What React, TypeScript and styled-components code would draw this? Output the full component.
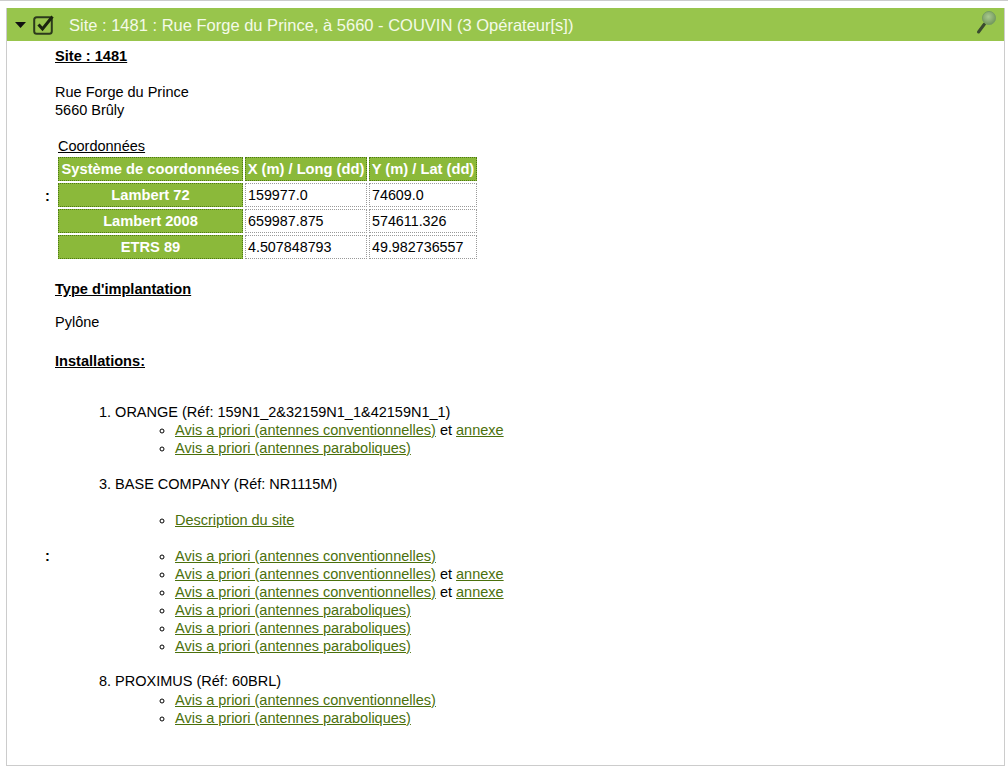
import * as React from "react";
import styled, { createGlobalStyle } from "styled-components";

const GlobalStyle = createGlobalStyle`
  html, body {
    margin: 0;
    padding: 0;
    background: #fff;
    color: #000;
    font-family: "Liberation Sans", Arial, sans-serif;
    font-size: 14.5px;
    line-height: 18px;
  }
`;

const Page = styled.div`
  height: 768px;
  box-sizing: border-box;
  padding: 7px 3px 2px 6px;
  border-top: 1px solid #ccc;
  overflow: hidden;
`;

const Panel = styled.div`
  height: 758px;
  box-sizing: border-box;
  border: 1px solid #ccc;
  border-top: 0;
`;

const Header = styled.div`
  height: 33px;
  box-sizing: border-box;
  background: #98c54c;
  display: flex;
  align-items: center;
  padding: 1px 6px 0 8px;
  color: #f4fae8;
  font-size: 16.5px;
`;

const Title = styled.span`
  margin-left: 14px;
  flex: 1;
`;

const Body = styled.div`
  display: grid;
  grid-template-columns: 48px 1fr;
  grid-template-rows: 309px 412px;
`;

const Colon = styled.div`
  display: flex;
  align-items: center;
  justify-content: flex-start;
  padding-left: 38px;
  font-weight: bold;
  grid-column: 1;
  position: relative;
  z-index: 1;
  width: 10px;
`;

const Cell = styled.div<{ $top: number }>`
  padding-top: ${(p) => p.$top}px;
`;

const Heading = styled.h3<{ $after: number }>`
  margin: 0 0 ${(p) => p.$after}px;
  font-size: 14.6px;
  line-height: 18px;
  font-weight: bold;
  text-decoration: underline;
`;

const Paragraph = styled.p<{ $after: number }>`
  margin: 0 0 ${(p) => p.$after}px;
`;

const CoordTitle = styled.div`
  margin-left: 3px;
  text-decoration: underline;
`;

const CoordTable = styled.table`
  border-collapse: separate;
  border-spacing: 2px;
  table-layout: fixed;
  width: 423px;
  margin: 0 0 19px 1px;
`;

const Th = styled.th<{ $width?: number }>`
  height: 24px;
  padding: 0 1px;
  width: ${(p) => (p.$width ? `${p.$width}px` : "auto")};
  box-sizing: border-box;
  background: #8bb93a;
  border: 1px dotted #4d7a12;
  color: #fff;
  font-size: 14.7px;
  font-weight: bold;
  text-align: center;
  white-space: nowrap;
  overflow: hidden;
`;

const Td = styled.td`
  height: 24px;
  box-sizing: border-box;
  padding: 0 2px;
  border: 1px dotted #999;
  font-size: 14.3px;
  white-space: nowrap;
`;

const Owners = styled.div`
  margin-top: 33px;
  padding-left: 44px;
`;

const Owner = styled.div<{ $after: number }>`
  margin-bottom: ${(p) => p.$after}px;
`;

const Links = styled.ul<{ $before?: number; $after?: number }>`
  margin: ${(p) => p.$before || 0}px 0 ${(p) => p.$after || 0}px;
  padding: 0 0 0 76px;
  list-style: circle;
`;

const A = styled.a`
  color: #4b700c;
  text-decoration: underline;
`;

const Search = () => (
  <svg width="24" height="28" viewBox="0 0 24 28">
    <defs>
      <radialGradient id="lens" cx="0.45" cy="0.4" r="0.65">
        <stop offset="0" stopColor="#a9c98f" />
        <stop offset="1" stopColor="#6f9459" />
      </radialGradient>
    </defs>
    <line x1="4.5" y1="21" x2="10.5" y2="13" stroke="#3a4a30" strokeWidth="3" strokeLinecap="round" />
    <circle cx="15" cy="7" r="6.6" fill="url(#lens)" stroke="#78a060" strokeWidth="1" />
  </svg>
);

const Checkbox = () => (
  <svg width="22" height="22" viewBox="0 0 22 22" fill="none">
    <rect x="1.2" y="3.2" width="17.6" height="16.6" rx="2.5" stroke="#2c3a1c" strokeWidth="2" />
    <path d="M5.5 10.5 L9.5 15 L19.5 2.5" stroke="#1c2410" strokeWidth="3" />
  </svg>
);

const Caret = () => (
  <svg width="11" height="6" viewBox="0 0 11 6">
    <path d="M0 0 H11 L5.5 6 Z" fill="#111" />
  </svg>
);

const CheckWrap = styled.span`
  display: flex;
  margin-left: 7px;
`;

const conv = "Avis a priori (antennes conventionnelles)";
const para = "Avis a priori (antennes paraboliques)";

const Item = ({ text, annexe }: { text: string; annexe?: boolean }) => (
  <li>
    <A href="#">{text}</A>
    {annexe && (
      <>
        {" et "}
        <A href="#">annexe</A>
      </>
    )}
  </li>
);

const coords = [
  ["Lambert 72", "159977.0", "74609.0"],
  ["Lambert 2008", "659987.875", "574611.326"],
  ["ETRS 89", "4.507848793", "49.982736557"],
];

export default function App() {
  return (
    <>
      <GlobalStyle />
      <Page>
        <Panel>
          <Header>
            <Caret />
            <CheckWrap>
              <Checkbox />
            </CheckWrap>
            <Title>Site : 1481 : Rue Forge du Prince, à 5660 - COUVIN (3 Opérateur[s])</Title>
            <Search />
          </Header>
          <Body>
            <Colon>:</Colon>
            <Cell $top={6}>
              <Heading $after={18}>Site : 1481</Heading>
              <Paragraph $after={18}>
                Rue Forge du Prince
                <br />
                5660 Brûly
              </Paragraph>
              <CoordTitle>Coordonnées</CoordTitle>
              <CoordTable>
                <thead>
                  <tr>
                    <Th $width={185}>Système de coordonnées</Th>
                    <Th $width={122}>X (m) / Long (dd)</Th>
                    <Th $width={108}>Y (m) / Lat (dd)</Th>
                  </tr>
                </thead>
                <tbody>
                  {coords.map((row) => (
                    <tr key={row[0]}>
                      <Th>{row[0]}</Th>
                      <Td>{row[1]}</Td>
                      <Td>{row[2]}</Td>
                    </tr>
                  ))}
                </tbody>
              </CoordTable>
              <Heading $after={15}>Type d'implantation</Heading>
              <Paragraph $after={0}>Pylône</Paragraph>
            </Cell>
            <Colon>:</Colon>
            <Cell $top={2}>
              <Heading $after={0}>Installations:</Heading>
              <Owners>
                <Owner $after={0}>1. ORANGE (Réf: 159N1_2&amp;32159N1_1&amp;42159N1_1)</Owner>
                <Links $after={18}>
                  <Item text={conv} annexe />
                  <Item text={para} />
                </Links>
                <Owner $after={0}>3. BASE COMPANY (Réf: NR1115M)</Owner>
                <Links $before={18} $after={18}>
                  <Item text="Description du site" />
                </Links>
                <Links $after={17}>
                  <Item text={conv} />
                  <Item text={conv} annexe />
                  <Item text={conv} annexe />
                  <Item text={para} />
                  <Item text={para} />
                  <Item text={para} />
                </Links>
                <Owner $after={1}>8. PROXIMUS (Réf: 60BRL)</Owner>
                <Links>
                  <Item text={conv} />
                  <Item text={para} />
                </Links>
              </Owners>
            </Cell>
          </Body>
        </Panel>
      </Page>
    </>
  );
}
